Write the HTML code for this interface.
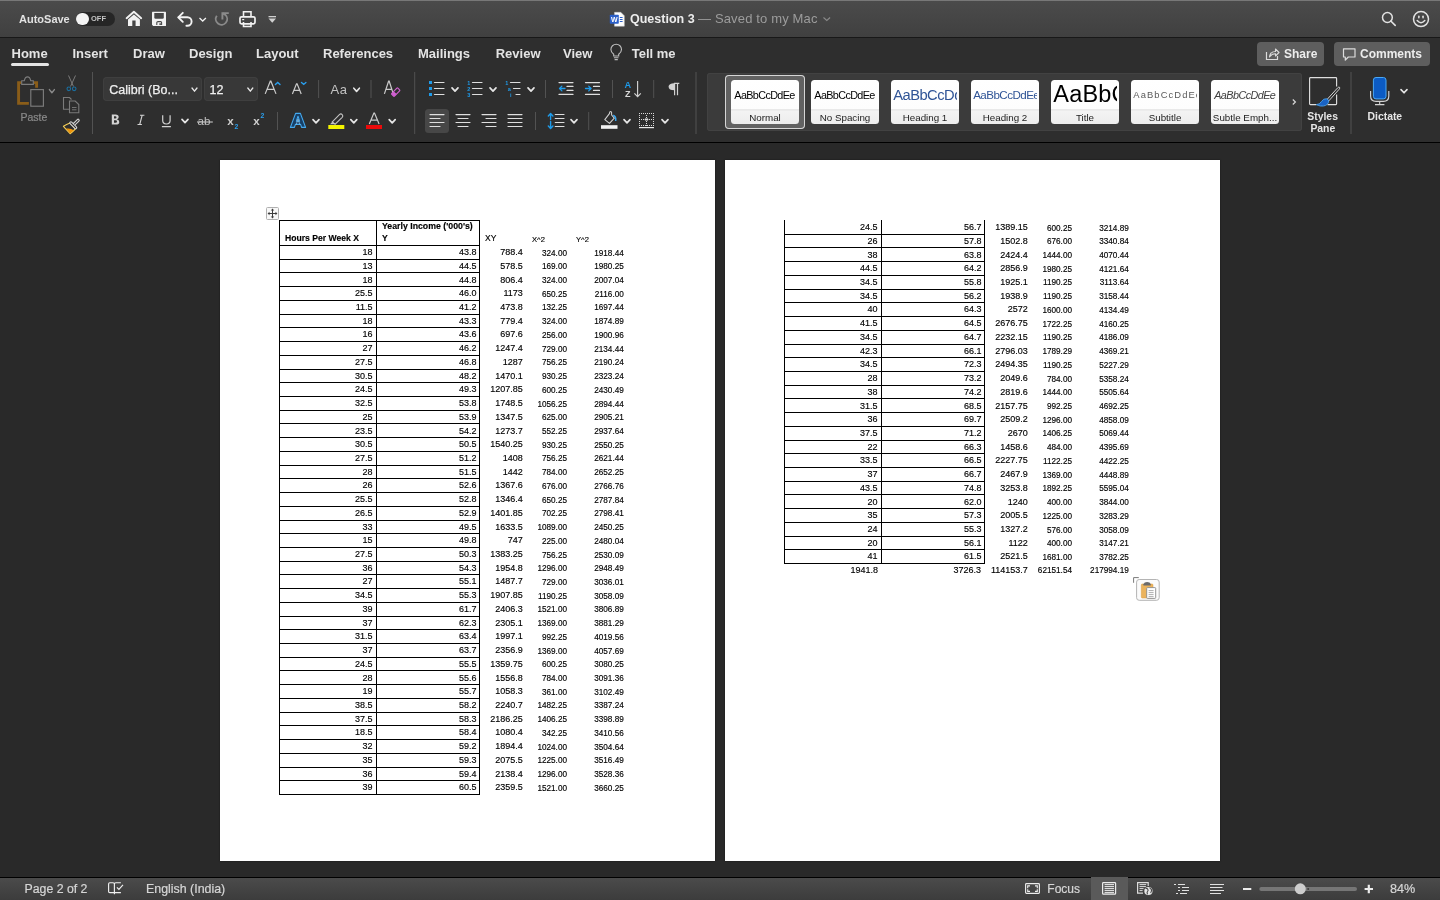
<!DOCTYPE html>
<html><head><meta charset="utf-8"><title>Question 3</title>
<style>
html,body{margin:0;padding:0;}
body{width:1440px;height:900px;overflow:hidden;position:relative;background:#292929;font-family:"Liberation Sans",sans-serif;}
.r{position:absolute;}
.t{position:absolute;line-height:0;white-space:nowrap;}
.d .t{-webkit-text-stroke:0.15px #000;}
svg.r{overflow:visible;}
</style></head><body><div id="w" style="position:absolute;left:0;top:0;width:1440px;height:900px;will-change:transform">
<div class="r" style="left:0;top:0;width:1440px;height:37px;background:linear-gradient(#4b4b4b,#404040)"></div><div class="r" style="left:0px;top:0px;width:1440px;height:1px;background:#787878;"></div><div class="r" style="left:0px;top:37px;width:1440px;height:1px;background:#181818;"></div><div class="r" style="left:0px;top:38px;width:1440px;height:104px;background:#2e2e2e;"></div><div class="r" style="left:0px;top:142px;width:1440px;height:1px;background:#000;"></div><div class="r" style="left:0px;top:877px;width:1440px;height:1px;background:#000;"></div><div class="r" style="left:0;top:878px;width:1440px;height:22px;background:linear-gradient(#4b4b4b,#3c3c3c)"></div><div class="t" style="left:19.00px;top:19.19px;font-size:11px;font-weight:700;color:#e2e2e2;">AutoSave</div><div class="r" style="left:76px;top:12px;width:39px;height:14px;border-radius:7px;background:#262626"></div><div class="r" style="left:76px;top:12.8px;width:12.5px;height:12.5px;border-radius:50%;background:#f4f4f4"></div><div class="t" style="left:91.00px;top:19.20px;font-size:7.5px;font-weight:700;color:#c4c4c4;">OFF</div><div class="t" style="left:630.00px;top:19.37px;font-size:12.5px;font-weight:700;color:#ececec;">Question 3</div><div class="t" style="left:698.00px;top:19.20px;font-size:13px;color:#9c9c9c;letter-spacing:0.15px;">— Saved to my Mac</div><div class="t" style="left:11.50px;top:53.50px;font-size:13px;font-weight:700;color:#e4e4e4;">Home</div><div class="t" style="left:72.50px;top:53.50px;font-size:13px;font-weight:700;color:#e4e4e4;">Insert</div><div class="t" style="left:133.00px;top:53.50px;font-size:13px;font-weight:700;color:#e4e4e4;">Draw</div><div class="t" style="left:189.00px;top:53.50px;font-size:13px;font-weight:700;color:#e4e4e4;">Design</div><div class="t" style="left:256.00px;top:53.50px;font-size:13px;font-weight:700;color:#e4e4e4;">Layout</div><div class="t" style="left:323.00px;top:53.50px;font-size:13px;font-weight:700;color:#e4e4e4;">References</div><div class="t" style="left:418.00px;top:53.50px;font-size:13px;font-weight:700;color:#e4e4e4;">Mailings</div><div class="t" style="left:495.70px;top:53.50px;font-size:13px;font-weight:700;color:#e4e4e4;">Review</div><div class="t" style="left:563.00px;top:53.50px;font-size:13px;font-weight:700;color:#e4e4e4;">View</div><div class="t" style="left:631.70px;top:53.50px;font-size:13px;font-weight:700;color:#e4e4e4;">Tell me</div><div class="r" style="left:11px;top:63px;width:38px;height:3px;border-radius:1.5px;background:#e4e4e4"></div><div class="r" style="left:1257px;top:42px;width:67px;height:24px;border-radius:4px;background:#5e5e5e"></div><div class="r" style="left:1334px;top:42px;width:96px;height:24px;border-radius:4px;background:#5e5e5e"></div><div class="t" style="left:1284.00px;top:53.84px;font-size:12px;font-weight:700;color:#ececec;">Share</div><div class="t" style="left:1360.00px;top:53.84px;font-size:12px;font-weight:700;color:#ececec;">Comments</div><div class="r" style="left:103px;top:77px;width:99px;height:24px;border-radius:4px;background:#383838;box-shadow:inset 0 0 0 1px #3f3f3f"></div><div class="r" style="left:204px;top:77px;width:54px;height:24px;border-radius:4px;background:#383838;box-shadow:inset 0 0 0 1px #3f3f3f"></div><div class="t" style="left:109.20px;top:89.57px;font-size:12.5px;color:#f0f0f0;-webkit-text-stroke:0.25px #f0f0f0;">Calibri (Bo...</div><div class="t" style="left:209.60px;top:89.57px;font-size:12.5px;color:#f0f0f0;-webkit-text-stroke:0.25px #f0f0f0;">12</div><div class="t" style="left:20.50px;top:117.36px;font-size:10.5px;color:#8a8a8a;-webkit-text-stroke:0.2px currentColor;">Paste</div><div class="r" style="left:707px;top:73px;width:595px;height:58px;border-radius:3px;background:#3b3b3b;box-shadow:inset 0 0 0 1px #424242"></div><div class="r" style="left:725px;top:75px;width:80px;height:53.5px;border-radius:4px;background:#626262;box-shadow:inset 0 0 0 1px #d6d6d6"></div><div class="r" style="left:731px;top:80px;width:68px;height:44px;border-radius:3.5px;background:linear-gradient(#fff 0,#fdfdfd 29.5px,#e9e9e9 29.5px,#ececec 30.5px,#f3f3f3 31px,#ededed 44px);overflow:hidden"><div class="r" style="left:0;top:0;width:66px;height:30px;overflow:hidden"><div class="t" style="left:3.3px;top:15.26px;font-size:10.8px;color:#000;font-style:normal;letter-spacing:-0.62px">AaBbCcDdEe</div></div><div class="t" style="left:0;width:68px;text-align:center;top:37.60px;font-size:9.8px;color:#1c1c1c">Normal</div></div><div class="r" style="left:811px;top:80px;width:68px;height:44px;border-radius:3.5px;background:linear-gradient(#fff 0,#fdfdfd 29.5px,#e9e9e9 29.5px,#ececec 30.5px,#f3f3f3 31px,#ededed 44px);overflow:hidden"><div class="r" style="left:0;top:0;width:66px;height:30px;overflow:hidden"><div class="t" style="left:3.3px;top:15.26px;font-size:10.8px;color:#000;font-style:normal;letter-spacing:-0.62px">AaBbCcDdEe</div></div><div class="t" style="left:0;width:68px;text-align:center;top:37.60px;font-size:9.8px;color:#1c1c1c">No Spacing</div></div><div class="r" style="left:891px;top:80px;width:68px;height:44px;border-radius:3.5px;background:linear-gradient(#fff 0,#fdfdfd 29.5px,#e9e9e9 29.5px,#ececec 30.5px,#f3f3f3 31px,#ededed 44px);overflow:hidden"><div class="r" style="left:0;top:0;width:66px;height:30px;overflow:hidden"><div class="t" style="left:2.2px;top:14.91px;font-size:14.7px;color:#2f5496;font-style:normal;letter-spacing:-0.5px">AaBbCcDdEe</div></div><div class="t" style="left:0;width:68px;text-align:center;top:37.60px;font-size:9.8px;color:#1c1c1c">Heading 1</div></div><div class="r" style="left:971px;top:80px;width:68px;height:44px;border-radius:3.5px;background:linear-gradient(#fff 0,#fdfdfd 29.5px,#e9e9e9 29.5px,#ececec 30.5px,#f3f3f3 31px,#ededed 44px);overflow:hidden"><div class="r" style="left:0;top:0;width:66px;height:30px;overflow:hidden"><div class="t" style="left:2.2px;top:15.08px;font-size:11.6px;color:#2f5496;font-style:normal;letter-spacing:-0.55px">AaBbCcDdEe</div></div><div class="t" style="left:0;width:68px;text-align:center;top:37.60px;font-size:9.8px;color:#1c1c1c">Heading 2</div></div><div class="r" style="left:1051px;top:80px;width:68px;height:44px;border-radius:3.5px;background:linear-gradient(#fff 0,#fdfdfd 29.5px,#e9e9e9 29.5px,#ececec 30.5px,#f3f3f3 31px,#ededed 44px);overflow:hidden"><div class="r" style="left:0;top:0;width:66px;height:30px;overflow:hidden"><div class="t" style="left:2.3px;top:14.16px;font-size:23.5px;color:#000;font-style:normal;letter-spacing:0.2px">AaBbCcDdEe</div></div><div class="t" style="left:0;width:68px;text-align:center;top:37.60px;font-size:9.8px;color:#1c1c1c">Title</div></div><div class="r" style="left:1131px;top:80px;width:68px;height:44px;border-radius:3.5px;background:linear-gradient(#fff 0,#fdfdfd 29.5px,#e9e9e9 29.5px,#ececec 30.5px,#f3f3f3 31px,#ededed 44px);overflow:hidden"><div class="r" style="left:0;top:0;width:66px;height:30px;overflow:hidden"><div class="t" style="left:2.3px;top:15.04px;font-size:9.4px;color:#5a5a5a;font-style:normal;letter-spacing:1.1px">AaBbCcDdEe</div></div><div class="t" style="left:0;width:68px;text-align:center;top:37.60px;font-size:9.8px;color:#1c1c1c">Subtitle</div></div><div class="r" style="left:1211px;top:80px;width:68px;height:44px;border-radius:3.5px;background:linear-gradient(#fff 0,#fdfdfd 29.5px,#e9e9e9 29.5px,#ececec 30.5px,#f3f3f3 31px,#ededed 44px);overflow:hidden"><div class="r" style="left:0;top:0;width:66px;height:30px;overflow:hidden"><div class="t" style="left:3.2px;top:15.26px;font-size:10.8px;color:#404040;font-style:italic;letter-spacing:-0.55px">AaBbCcDdEe</div></div><div class="t" style="left:0;width:68px;text-align:center;top:37.60px;font-size:9.8px;color:#1c1c1c">Subtle Emph...</div></div><div class="t" style="left:1307.30px;top:116.90px;font-size:10.4px;font-weight:700;color:#e6e6e6;">Styles</div><div class="t" style="left:1310.40px;top:128.80px;font-size:10.4px;font-weight:700;color:#e6e6e6;">Pane</div><div class="t" style="left:1367.50px;top:117.20px;font-size:10.4px;font-weight:700;color:#e6e6e6;">Dictate</div><div class="t" style="left:24.50px;top:888.74px;font-size:12.3px;color:#d6d6d6;-webkit-text-stroke:0.2px currentColor;">Page 2 of 2</div><div class="t" style="left:146.00px;top:888.70px;font-size:12.4px;color:#d6d6d6;-webkit-text-stroke:0.2px currentColor;">English (India)</div><div class="t" style="left:1047.30px;top:888.84px;font-size:12px;color:#d6d6d6;-webkit-text-stroke:0.2px currentColor;">Focus</div><div class="t" style="left:1390.00px;top:888.63px;font-size:12.6px;color:#d6d6d6;-webkit-text-stroke:0.2px currentColor;">84%</div><div class="r" style="left:1091px;top:877px;width:37px;height:23px;background:#5a5a5a;"></div><svg class="r" style="left:0;top:0" width="1440" height="143" viewBox="0 0 1440 143"><path d="M126.6 18.2 L133.9 11.7 L141.2 18.2" fill="none" stroke="#f2f2f2" stroke-width="1.9" stroke-linejoin="round" stroke-linecap="round"/><path d="M128 19.6 L133.9 14.5 L139.9 19.6 V26 H135.6 V20.4 H132.3 V26 H128 Z" fill="#f2f2f2"/><path d="M152 12.4 Q152 11.8 152.6 11.8 H165.4 Q166 11.8 166 12.4 V25.4 Q166 26 165.4 26 H153.2 L152 24.8 Z" fill="#f2f2f2"/><path d="M154.3 13.1 H163.8 V17.4 Q163.8 18.7 162.5 18.7 H155.6 Q154.3 18.7 154.3 17.4 Z" fill="#474747"/><path d="M156.8 25 V22.6 Q156.8 21.6 158 21.6 H160.6 Q161.6 21.6 161.6 22.6 V25" fill="none" stroke="#474747" stroke-width="1.1"/><rect x="159.4" y="23.3" width="1.5" height="1.7" fill="#474747"/><path d="M178.6 17.3 H187.4 A4.2 4.2 0 0 1 187.4 25.7 H186.4" fill="none" stroke="#f2f2f2" stroke-width="1.9" stroke-linecap="round"/><path d="M182.8 12.8 L178.3 17.3 L182.8 21.8" fill="none" stroke="#f2f2f2" stroke-width="1.9" stroke-linecap="round" stroke-linejoin="round"/><path d="M199.5 18 L202.7 21 L205.9 18" fill="none" stroke="#f2f2f2" stroke-width="1.3"/><path d="M216.8 15.8 A5.7 5.7 0 1 0 225.4 14.9 L222.6 13.4" fill="none" stroke="#8a8a8a" stroke-width="1.9"/><path d="M222.4 19.6 V13.1 H228.8" fill="none" stroke="#8a8a8a" stroke-width="1.9"/><path d="M243.5 17 V11.8 H251 V17 M243.5 22 V26.5 H251 V22" fill="none" stroke="#f2f2f2" stroke-width="1.6"/><rect x="240" y="16.8" width="15" height="7" rx="1.5" fill="none" stroke="#f2f2f2" stroke-width="1.7"/><rect x="242.2" y="19" width="2" height="1.2" fill="#f2f2f2"/><rect x="268.5" y="16" width="7.5" height="1.3" fill="#d0d0d0"/><path d="M268.5 18.6 H276 L272.25 22.8 Z" fill="#d0d0d0"/><path d="M614.5 12.3 H620.8 L624.3 15.8 V26.2 H614.5 Z" fill="#fdfdfd" stroke="#c8c8c8" stroke-width="0.5"/><rect x="609.8" y="14.8" width="9" height="9" rx="0.8" fill="#2b5fc9"/><text x="614.3" y="22" font-size="7" font-weight="700" fill="#fff" text-anchor="middle" font-family="Liberation Sans">W</text><path d="M619.8 17.5 H622.6 M619.8 19.5 H622.6 M619.8 21.5 H622.6" stroke="#2b5fc9" stroke-width="1"/><path d="M823.5 17.5 L826.8 20.5 L830.1 17.5" fill="none" stroke="#8a8a8a" stroke-width="1.1"/><circle cx="1387.4" cy="17.5" r="4.9" fill="none" stroke="#e2e2e2" stroke-width="1.5"/><path d="M1390.8 21 L1395.2 25.4" stroke="#e2e2e2" stroke-width="1.6" stroke-linecap="round"/><circle cx="1421" cy="19.1" r="7.5" fill="none" stroke="#e2e2e2" stroke-width="1.5"/><rect x="1418.1" y="15.6" width="1.5" height="2.9" rx="0.7" fill="#e2e2e2"/><rect x="1422.3" y="15.6" width="1.5" height="2.9" rx="0.7" fill="#e2e2e2"/><path d="M1417.2 20.6 Q1421 24.8 1424.8 20.6" fill="none" stroke="#e2e2e2" stroke-width="1.5" stroke-linecap="round"/><path d="M613.7 54.3 Q610.9 52.1 610.9 49.5 A5.3 5.3 0 0 1 621.5 49.5 Q621.5 52.1 618.7 54.3 V56 H613.7 Z" fill="none" stroke="#bdbdbd" stroke-width="1.1"/><path d="M613.9 57.8 H618.5 M614.6 59.6 H617.8" stroke="#bdbdbd" stroke-width="1.1"/><path d="M1266.5 52 V59.5 H1277.5 V56" fill="none" stroke="#dcdcdc" stroke-width="1.2"/><path d="M1269.5 57 Q1270 51.5 1275.5 51.5 V49 L1279 52.5 L1275.5 56 V53.8 Q1272 53.5 1269.5 57 Z" fill="none" stroke="#dcdcdc" stroke-width="1.1" stroke-linejoin="round"/><path d="M1343.5 48.8 H1355 V57 H1348.3 L1345.3 60.2 V57 H1343.5 Z" fill="none" stroke="#dcdcdc" stroke-width="1.2" stroke-linejoin="round"/><path d="M21.2 82.6 H18.6 V103.4 H28.9 M33.9 82.6 H36.6 V87.8" fill="none" stroke="#8a5d19" stroke-width="2.9"/><path d="M21.7 84.4 V80.7 H24.3 Q25 76.9 27.5 76.9 Q30 76.9 30.7 80.7 H33.3 V84.4 Z" fill="none" stroke="#7c7c7c" stroke-width="1.1"/><rect x="30.8" y="89.6" width="12.6" height="16.6" fill="none" stroke="#7c7c7c" stroke-width="1.15"/><path d="M49.4 89.6 L51.9 92.8 L54.4 89.6" fill="none" stroke="#8a8a8a" stroke-width="1.4" stroke-linecap="round" stroke-linejoin="round"/><path d="M68.5 75.5 L73.5 86.5 M75.5 75.5 L70.5 86.5" stroke="#7a7a7a" stroke-width="1"/><circle cx="68.8" cy="88.8" r="1.8" fill="none" stroke="#1a6fa0" stroke-width="1.1"/><circle cx="74.2" cy="88.8" r="1.8" fill="none" stroke="#1a6fa0" stroke-width="1.1"/><path d="M70 109.3 H63.5 V97.5 H69.5 L71.5 99.5" fill="none" stroke="#7a7a7a" stroke-width="1.1"/><path d="M69.5 101 H75.2 L78.8 104.6 V112.7 H69.5 Z" fill="none" stroke="#7a7a7a" stroke-width="1.1"/><path d="M72 107.5 H76.5 M72 109.8 H76.5" stroke="#7a7a7a" stroke-width="0.9"/><path d="M63.4 126.3 Q66.5 124.2 70 123 L75.3 129 Q72.8 131.6 70.1 133.7 Z" fill="#2e2e2e" stroke="#f4cd55" stroke-width="1.1" stroke-linejoin="round"/><path d="M66.2 128.6 Q70.6 127.9 73.9 130.3 L70.1 133.3 Z" fill="#f0950a"/><path d="M74.2 124.2 L78.1 120.3 M70.9 122.9 L75.6 127.6" stroke="#d4d4d4" stroke-width="3.3" stroke-linecap="round"/><path d="M74.6 123.8 L78.1 120.3 M70.9 122.9 L75.6 127.6" stroke="#2e2e2e" stroke-width="1.1" stroke-linecap="round"/><path d="M92.5 72 V134" stroke="#525252" stroke-width="1"/><path d="M318.6 80 V98" stroke="#525252" stroke-width="1"/><path d="M371 80 V98" stroke="#525252" stroke-width="1"/><path d="M277.5 112 V130" stroke="#525252" stroke-width="1"/><path d="M414.7 72 V134" stroke="#525252" stroke-width="1"/><path d="M545.5 80 V98" stroke="#525252" stroke-width="1"/><path d="M612.5 80 V98" stroke="#525252" stroke-width="1"/><path d="M653.7 80 V98" stroke="#525252" stroke-width="1"/><path d="M535.5 112 V130" stroke="#525252" stroke-width="1"/><path d="M588.7 112 V130" stroke="#525252" stroke-width="1"/><path d="M696 72 V134" stroke="#525252" stroke-width="1"/><path d="M1351 72 V134" stroke="#525252" stroke-width="1"/><path d="M192 88.0 L194.5 91.19999999999999 L197 88.0" fill="none" stroke="#e6e6e6" stroke-width="1.3" stroke-linecap="round" stroke-linejoin="round"/><path d="M247.8 88.0 L250.3 91.19999999999999 L252.8 88.0" fill="none" stroke="#e6e6e6" stroke-width="1.3" stroke-linecap="round" stroke-linejoin="round"/><path d="M353.8 88.2 L356.6 91.39999999999999 L359.40000000000003 88.2" fill="none" stroke="#e6e6e6" stroke-width="1.6" stroke-linecap="round" stroke-linejoin="round"/><path d="M182 119.4 L185.0 122.6 L188 119.4" fill="none" stroke="#e6e6e6" stroke-width="1.7" stroke-linecap="round" stroke-linejoin="round"/><path d="M313 119.60000000000001 L316.0 122.8 L319 119.60000000000001" fill="none" stroke="#e6e6e6" stroke-width="1.7" stroke-linecap="round" stroke-linejoin="round"/><path d="M350.8 119.60000000000001 L353.8 122.8 L356.8 119.60000000000001" fill="none" stroke="#e6e6e6" stroke-width="1.7" stroke-linecap="round" stroke-linejoin="round"/><path d="M389.2 119.60000000000001 L392.2 122.8 L395.2 119.60000000000001" fill="none" stroke="#e6e6e6" stroke-width="1.7" stroke-linecap="round" stroke-linejoin="round"/><path d="M452 87.9 L455.0 91.1 L458 87.9" fill="none" stroke="#e6e6e6" stroke-width="1.7" stroke-linecap="round" stroke-linejoin="round"/><path d="M490 87.9 L493.0 91.1 L496 87.9" fill="none" stroke="#e6e6e6" stroke-width="1.7" stroke-linecap="round" stroke-linejoin="round"/><path d="M528 87.9 L531.0 91.1 L534 87.9" fill="none" stroke="#e6e6e6" stroke-width="1.7" stroke-linecap="round" stroke-linejoin="round"/><path d="M571 119.60000000000001 L574.0 122.8 L577 119.60000000000001" fill="none" stroke="#e6e6e6" stroke-width="1.7" stroke-linecap="round" stroke-linejoin="round"/><path d="M624 119.60000000000001 L627.0 122.8 L630 119.60000000000001" fill="none" stroke="#e6e6e6" stroke-width="1.7" stroke-linecap="round" stroke-linejoin="round"/><path d="M662 119.60000000000001 L665.0 122.8 L668 119.60000000000001" fill="none" stroke="#e6e6e6" stroke-width="1.7" stroke-linecap="round" stroke-linejoin="round"/><path d="M1401 89.60000000000001 L1404.0 92.8 L1407 89.60000000000001" fill="none" stroke="#e6e6e6" stroke-width="1.6" stroke-linecap="round" stroke-linejoin="round"/><path d="M265.2 93.9 L270.3 81.2 H270.9 L276 93.9 M267.1 89.3 H274.1" fill="none" stroke="#cacaca" stroke-width="1.2"/><path d="M275.4 84.6 L277.7 82.4 L280 84.6" fill="none" stroke="#2a9fee" stroke-width="1.4" stroke-linecap="round"/><path d="M292.4 93.9 L296.5 83.8 H297.1 L301.2 93.9 M293.9 90.4 H299.7" fill="none" stroke="#cacaca" stroke-width="1.2"/><path d="M301.5 82.4 L303.7 84.4 L305.9 82.4" fill="none" stroke="#2a9fee" stroke-width="1.4" stroke-linecap="round"/><text x="330.6" y="94" font-size="13" fill="#c2c2c2" font-family="Liberation Sans" letter-spacing="0.5">Aa</text><path d="M384.4 93.9 L388.6 81.2 H389.2 L393.3 93.9 M385.9 89.3 H391.9" fill="none" stroke="#cacaca" stroke-width="1.2"/><path d="M391.8 93.4 L396.9 88.2 Q397.4 87.7 397.9 88.2 L399.6 89.9 Q400.1 90.4 399.6 90.9 L394.5 96.1 Q394 96.6 393.5 96.1 L391.8 94.4 Q391.3 93.9 391.8 93.4 Z" fill="none" stroke="#d060d0" stroke-width="1.15"/><path d="M392 93.3 L393.9 91.4 L396.6 94.1 L394.7 96 Q394 96.6 393.4 96 L392 94.6 Q391.4 94 392 93.3 Z" fill="#d060d0"/><path d="M111.8 114.5 H115.6 Q118.7 114.5 118.7 117 Q118.7 118.8 116.8 119.3 Q119.3 119.8 119.3 122 Q119.3 124.6 115.9 124.6 H111.8 Z M114 116.3 V118.6 H115.3 Q116.5 118.6 116.5 117.45 Q116.5 116.3 115.3 116.3 Z M114 120.3 V122.8 H115.6 Q117 122.8 117 121.55 Q117 120.3 115.6 120.3 Z" fill="#d2d2d2" fill-rule="evenodd"/><path d="M140 115.2 H144.4 M137.5 124.5 H141.9 M142.2 115.2 L139.7 124.5" fill="none" stroke="#d2d2d2" stroke-width="1.15"/><path d="M162.7 115.2 V120.6 Q162.7 124 166.4 124 Q170.1 124 170.1 120.6 V115.2 M161.9 126.6 H170.9" fill="none" stroke="#d2d2d2" stroke-width="1.2"/><text x="197.6" y="125" font-size="11.6" fill="#c2c2c2" font-family="Liberation Sans">ab</text><path d="M197 122 H212.8" stroke="#c2c2c2" stroke-width="1.15"/><text x="227.3" y="125" font-size="11.6" font-weight="700" fill="#d2d2d2" font-family="Liberation Sans">x</text><text x="234.6" y="129.2" font-size="6.8" font-weight="700" fill="#2a9fee" font-family="Liberation Sans">2</text><text x="253.2" y="125" font-size="11.6" font-weight="700" fill="#d2d2d2" font-family="Liberation Sans">x</text><text x="260.4" y="118.3" font-size="6.8" font-weight="700" fill="#2a9fee" font-family="Liberation Sans">2</text><path d="M290.4 127.4 L295.6 113.4 H300.4 L305.6 127.4 H301.6 L300.6 124.4 H295.4 L294.4 127.4 Z M296.4 121.2 H299.6 L298 116.2 Z" fill="#173f66" stroke="#44aaf0" stroke-width="1.1" stroke-linejoin="round" fill-rule="evenodd"/><path d="M296.2 124.6 L298 119 L299.8 124.6" fill="none" stroke="#9fd3f7" stroke-width="0.8" opacity="0.8"/><path d="M332.3 121.8 L339.4 114.6 Q340.9 113.3 342.2 114.6 Q343.5 115.9 342.2 117.3 L335.1 124.2 Z" fill="none" stroke="#c2c2c2" stroke-width="1.1"/><path d="M332.3 121.8 L330 124.3 H333.5 L335.1 124.2 Z" fill="#c2c2c2"/><rect x="328.3" y="125" width="16" height="4" fill="#f4f400"/><path d="M369.3 124 L373.9 113 H374.5 L379.1 124 M370.9 120.2 H377.5" fill="none" stroke="#cacaca" stroke-width="1.2"/><rect x="366" y="125" width="16" height="4" fill="#ec0b0b"/><rect x="429" y="81.0" width="3" height="3" fill="#1e9bea"/><rect x="429" y="87.0" width="3" height="3" fill="#1e9bea"/><rect x="429" y="93.0" width="3" height="3" fill="#1e9bea"/><path d="M434.5 82.5 H444" stroke="#dedede" stroke-width="1.2" stroke-linecap="round"/><path d="M434.5 88.5 H444" stroke="#dedede" stroke-width="1.2" stroke-linecap="round"/><path d="M434.5 94.5 H444" stroke="#dedede" stroke-width="1.2" stroke-linecap="round"/><text x="467.2" y="84.8" font-size="5.5" font-weight="700" fill="#1e9bea" font-family="Liberation Sans">1</text><text x="467.2" y="90.8" font-size="5.5" font-weight="700" fill="#1e9bea" font-family="Liberation Sans">2</text><text x="467.2" y="96.8" font-size="5.5" font-weight="700" fill="#1e9bea" font-family="Liberation Sans">3</text><path d="M472.5 82.5 H482" stroke="#dedede" stroke-width="1.2" stroke-linecap="round"/><path d="M472.5 88.5 H482" stroke="#dedede" stroke-width="1.2" stroke-linecap="round"/><path d="M472.5 94.5 H482" stroke="#dedede" stroke-width="1.2" stroke-linecap="round"/><text x="505.3" y="84.8" font-size="5.5" font-weight="700" fill="#1e9bea" font-family="Liberation Sans">1</text><text x="507.8" y="90.8" font-size="5.5" font-weight="700" fill="#1e9bea" font-family="Liberation Sans">a</text><text x="510" y="97" font-size="5.5" font-weight="700" fill="#1e9bea" font-family="Liberation Sans">i</text><path d="M510.5 82.5 H520" stroke="#dedede" stroke-width="1.2" stroke-linecap="round"/><path d="M513.5 88.5 H520" stroke="#dedede" stroke-width="1.2" stroke-linecap="round"/><path d="M516 94.5 H520" stroke="#dedede" stroke-width="1.2" stroke-linecap="round"/><path d="M559 82.6 H573" stroke="#dedede" stroke-width="1.2" stroke-linecap="round"/><path d="M559 94.4 H573" stroke="#dedede" stroke-width="1.2" stroke-linecap="round"/><path d="M567 86.4 H573" stroke="#dedede" stroke-width="1.2" stroke-linecap="round"/><path d="M567 90.4 H573" stroke="#dedede" stroke-width="1.2" stroke-linecap="round"/><path d="M565 88.5 H559.6 M561.9 86.1 L559.5 88.5 L561.9 90.9" fill="none" stroke="#1e9bea" stroke-width="1.3" stroke-linecap="round" stroke-linejoin="round"/><path d="M585.5 82.6 H599.5" stroke="#dedede" stroke-width="1.2" stroke-linecap="round"/><path d="M585.5 94.4 H599.5" stroke="#dedede" stroke-width="1.2" stroke-linecap="round"/><path d="M593.5 86.4 H599.5" stroke="#dedede" stroke-width="1.2" stroke-linecap="round"/><path d="M593.5 90.4 H599.5" stroke="#dedede" stroke-width="1.2" stroke-linecap="round"/><path d="M585.5 88.5 H591 M588.7 86.1 L591.1 88.5 L588.7 90.9" fill="none" stroke="#1e9bea" stroke-width="1.3" stroke-linecap="round" stroke-linejoin="round"/><text x="624.6" y="87.8" font-size="9.2" font-weight="700" fill="#1e9bea" font-family="Liberation Sans">A</text><text x="624.9" y="97" font-size="9" font-weight="700" fill="#d8d8d8" font-family="Liberation Sans">Z</text><path d="M637.6 81 V96.5 M634.4 93.4 L637.6 96.6 L640.8 93.4" fill="none" stroke="#d2d2d2" stroke-width="1.15"/><path d="M673.9 83.3 H679.3 M674.6 83.3 V95.2 M677.5 83.3 V95.2" stroke="#d2d2d2" stroke-width="1.2"/><path d="M674.4 83.3 Q668.6 83.3 668.6 86.8 Q668.6 90.3 674.4 90.3 Z" fill="#d2d2d2"/><rect x="425" y="109" width="24" height="24" rx="3.5" fill="#474747"/><path d="M430 114.55 H444" stroke="#dedede" stroke-width="1.2" stroke-linecap="round"/><path d="M430 122.5 H444" stroke="#dedede" stroke-width="1.2" stroke-linecap="round"/><path d="M430 118.5 H440" stroke="#dedede" stroke-width="1.2" stroke-linecap="round"/><path d="M430 126.5 H440" stroke="#dedede" stroke-width="1.2" stroke-linecap="round"/><path d="M456 114.55 H470" stroke="#dedede" stroke-width="1.2" stroke-linecap="round"/><path d="M456 122.5 H470" stroke="#dedede" stroke-width="1.2" stroke-linecap="round"/><path d="M458 118.5 H468" stroke="#dedede" stroke-width="1.2" stroke-linecap="round"/><path d="M458 126.5 H468" stroke="#dedede" stroke-width="1.2" stroke-linecap="round"/><path d="M482 114.55 H496" stroke="#dedede" stroke-width="1.2" stroke-linecap="round"/><path d="M482 122.5 H496" stroke="#dedede" stroke-width="1.2" stroke-linecap="round"/><path d="M486 118.5 H496" stroke="#dedede" stroke-width="1.2" stroke-linecap="round"/><path d="M486 126.5 H496" stroke="#dedede" stroke-width="1.2" stroke-linecap="round"/><path d="M508 114.55 H522" stroke="#dedede" stroke-width="1.2" stroke-linecap="round"/><path d="M508 118.5 H522" stroke="#dedede" stroke-width="1.2" stroke-linecap="round"/><path d="M508 122.5 H522" stroke="#dedede" stroke-width="1.2" stroke-linecap="round"/><path d="M508 126.5 H522" stroke="#dedede" stroke-width="1.2" stroke-linecap="round"/><path d="M555.3 114.5 H564" stroke="#dedede" stroke-width="1.2" stroke-linecap="round"/><path d="M555.3 118.5 H564" stroke="#dedede" stroke-width="1.2" stroke-linecap="round"/><path d="M555.3 122.5 H564" stroke="#dedede" stroke-width="1.2" stroke-linecap="round"/><path d="M555.3 126.5 H564" stroke="#dedede" stroke-width="1.2" stroke-linecap="round"/><path d="M550.6 114 V119.5 M550.6 121.5 V128 M548.3 116 L550.6 113.6 L552.9 116 M548.3 126 L550.6 128.4 L552.9 126" fill="none" stroke="#1e9bea" stroke-width="1.4" stroke-linecap="round" stroke-linejoin="round"/><path d="M604.8 119.6 L609.6 113.4 V112.4 Q609.6 111.4 610.6 111.4 Q611.6 111.4 611.6 112.4 V115 L614.3 118.2 L609.5 123.4 Z" fill="none" stroke="#d2d2d2" stroke-width="1.05" stroke-linejoin="round"/><path d="M613.2 115.2 Q616.3 116.4 615.7 121" fill="none" stroke="#3aa6ee" stroke-width="1.5"/><rect x="601" y="125.2" width="16.5" height="3.6" fill="#f2f2f2"/><g fill="#dadada"><rect x="639" y="113" width="1" height="1"/><rect x="639" y="125" width="1" height="1"/><rect x="641" y="113" width="1" height="1"/><rect x="641" y="125" width="1" height="1"/><rect x="643" y="113" width="1" height="1"/><rect x="643" y="125" width="1" height="1"/><rect x="645" y="113" width="1" height="1"/><rect x="645" y="125" width="1" height="1"/><rect x="647" y="113" width="1" height="1"/><rect x="647" y="125" width="1" height="1"/><rect x="649" y="113" width="1" height="1"/><rect x="649" y="125" width="1" height="1"/><rect x="651" y="113" width="1" height="1"/><rect x="651" y="125" width="1" height="1"/><rect x="653" y="113" width="1" height="1"/><rect x="653" y="125" width="1" height="1"/><rect x="639" y="115" width="1" height="1"/><rect x="653" y="115" width="1" height="1"/><rect x="646" y="115" width="1" height="1"/><rect x="639" y="117" width="1" height="1"/><rect x="653" y="117" width="1" height="1"/><rect x="646" y="117" width="1" height="1"/><rect x="639" y="119" width="1" height="1"/><rect x="653" y="119" width="1" height="1"/><rect x="646" y="119" width="1" height="1"/><rect x="639" y="121" width="1" height="1"/><rect x="653" y="121" width="1" height="1"/><rect x="646" y="121" width="1" height="1"/><rect x="639" y="123" width="1" height="1"/><rect x="653" y="123" width="1" height="1"/><rect x="646" y="123" width="1" height="1"/><rect x="639" y="125" width="1" height="1"/><rect x="653" y="125" width="1" height="1"/><rect x="646" y="125" width="1" height="1"/><rect x="641" y="119" width="1" height="1"/><rect x="643" y="119" width="1" height="1"/><rect x="645" y="119" width="1" height="1"/><rect x="647" y="119" width="1" height="1"/><rect x="649" y="119" width="1" height="1"/><rect x="651" y="119" width="1" height="1"/></g><path d="M646.5 117.6 L648 119.5 L646.5 121.4 L645 119.5 Z" fill="none" stroke="#dadada" stroke-width="0.8"/><path d="M639 127.6 H654" stroke="#ececec" stroke-width="1.2"/><path d="M1292.8 99.5 L1295.4 102 L1292.8 104.5" fill="none" stroke="#d8d8d8" stroke-width="1.2"/><path d="M1316.5 104.6 H1310.4 Q1309.6 104.6 1309.6 103.8 V78.4 Q1309.6 77.6 1310.4 77.6 H1335.8 Q1336.6 77.6 1336.6 78.4 V86.5 M1336.6 94.5 V103.8 Q1336.6 104.6 1335.8 104.6 H1327.5" fill="none" stroke="#dedede" stroke-width="1.15"/><path d="M1327.3 99.2 L1337.6 87.9 Q1339 86.6 1339.6 87.3 Q1340.2 88.1 1339 89.4 L1328.9 100.8 Z" fill="#2e2e2e" stroke="#d4d4d4" stroke-width="1"/><path d="M1316.4 104.6 Q1319.8 104.5 1321.4 101.6 Q1323.4 98.2 1326.8 98.8 Q1329.4 99.8 1328.4 102.6 Q1326.6 106.6 1320.4 106 Q1318 105.6 1316.4 104.6 Z" fill="#1a63c4" stroke="#4aa3ee" stroke-width="0.9"/><rect x="1373.4" y="77.5" width="12.6" height="21.4" rx="2.6" fill="#0b5bc4" stroke="#4aa8f5" stroke-width="1"/><path d="M1370.6 91 V96 Q1370.6 101.4 1376 101.4 H1383.4 Q1388.8 101.4 1388.8 96 V91 M1379.7 101.4 V104.6 M1375 104.6 H1384.4" fill="none" stroke="#d4d4d4" stroke-width="1.15"/></svg><svg class="r" style="left:0;top:870px" width="1440" height="30" viewBox="0 870 1440 30"><path d="M114.4 892.6 H109.8 Q108.6 892.6 108.6 891.4 V883.9 Q108.6 882.7 109.8 882.7 H113 Q114.4 882.7 114.4 884.1 V894.3 M114.4 884.1 Q114.4 882.7 115.8 882.7 H120.9 M114.4 892.6 H120.9" fill="none" stroke="#efefef" stroke-width="1.15"/><path d="M116.9 887.3 L118.9 889.3 L123 884.8" fill="none" stroke="#efefef" stroke-width="1.15"/><rect x="1025.6" y="883.6" width="13.8" height="9.7" rx="0.9" fill="none" stroke="#ececec" stroke-width="1.15"/><path d="M1027.7 888.2 V885.9 H1030 M1035 885.9 H1037.3 V888.2 M1037.3 889.2 V891.4 H1035 M1030 891.4 H1027.7 V889.2" fill="none" stroke="#ececec" stroke-width="1.1"/><rect x="1102.6" y="882.6" width="13" height="11.6" rx="0.8" fill="none" stroke="#ececec" stroke-width="1.2"/><path d="M1104.6 884.6 H1114 M1104.6 886.6 H1114 M1104.6 888.6 H1114 M1104.6 890.6 H1114 M1104.6 892.6 H1114" stroke="#ececec" stroke-width="1"/><path d="M1143 893.2 H1137.6 V882.6 H1148.2 V886.5" fill="none" stroke="#dcdcdc" stroke-width="1.2"/><path d="M1139.5 884.6 H1146.2 M1139.5 886.6 H1146.2 M1139.5 888.6 H1143.6 M1139.5 890.6 H1142.6" stroke="#dcdcdc" stroke-width="1"/><circle cx="1148.4" cy="891" r="5" fill="#474747"/><circle cx="1148.4" cy="891" r="4.1" fill="#e6e6e6"/><path d="M1145.5 888.6 Q1147 888 1147.8 889.3 Q1148.6 890.8 1147.4 891.6 Q1146.6 892.6 1147.6 894.3 M1149.8 887.5 Q1150 889 1151.4 889.2 Q1152 891.3 1150.6 892.8" fill="none" stroke="#474747" stroke-width="1.1"/><path d="M1174 884.5 H1176 M1178 884.5 H1185 M1178 887.5 H1180 M1182 887.5 H1189 M1178 890.5 H1180 M1182 890.5 H1189 M1176 893.5 H1178 M1180 893.5 H1187" stroke="#e0e0e0" stroke-width="1.1"/><path d="M1210 884.5 H1224 M1210 887.5 H1222.5 M1210 890.5 H1224 M1210 893.5 H1221" stroke="#e0e0e0" stroke-width="1.1"/><path d="M1243 889 H1251.3" stroke="#ececec" stroke-width="2"/><path d="M1364.6 889 H1373 M1368.8 884.8 V893.2" stroke="#ececec" stroke-width="2.2"/><rect x="1259.3" y="887" width="97.7" height="4" rx="2" fill="#767676"/><circle cx="1308.2" cy="889" r="1" fill="#3a3a3a"/><circle cx="1300.3" cy="888.8" r="5.5" fill="#cdcdcd"/></svg>
<div class="d"><div class="r" style="left:220px;top:160px;width:495px;height:701px;background:#fff;box-shadow:0 0 1.5px rgba(0,0,0,0.5)"></div><div class="r" style="left:266px;top:207px;width:13px;height:13px;border:1px solid #b0b0b0;border-radius:1.5px;background:#f8f8f8;box-sizing:border-box"></div><svg class="r" style="left:266px;top:207px" width="13" height="13" viewBox="0 0 13 13"><path d="M6.5 2.6v7.8M2.6 6.5h7.8" stroke="#3c3c3c" stroke-width="1"/><path d="M6.5 1.6l-1.7 1.9h3.4zM6.5 11.4l-1.7-1.9h3.4zM1.6 6.5l1.9-1.7v3.4zM11.4 6.5l-1.9-1.7v3.4z" fill="#3c3c3c"/></svg><div class="r" style="left:279px;top:220px;width:201px;height:1px;background:#000;"></div><div class="r" style="left:279px;top:220px;width:1px;height:25px;background:#000;"></div><div class="r" style="left:376px;top:220px;width:1px;height:25px;background:#000;"></div><div class="r" style="left:479px;top:220px;width:1px;height:25px;background:#000;"></div><div class="r" style="left:279px;top:245px;width:201px;height:1px;background:#000;"></div><div class="t" style="left:285.00px;top:237.82px;font-size:8.6px;font-weight:700;color:#000;">Hours Per Week X</div><div class="t" style="left:382.00px;top:225.72px;font-size:8.75px;font-weight:700;color:#000;">Yearly Income ('000's)</div><div class="t" style="left:382.00px;top:237.82px;font-size:8.6px;font-weight:700;color:#000;">Y</div><div class="t" style="left:485.00px;top:238.45px;font-size:8.5px;color:#000;">XY</div><div class="t" style="left:532.00px;top:240.17px;font-size:7.6px;color:#000;">X^2</div><div class="t" style="left:576.00px;top:240.17px;font-size:7.6px;color:#000;">Y^2</div><div class="r" style="left:279px;top:245px;width:1px;height:550px;background:#000;"></div><div class="r" style="left:376px;top:245px;width:1px;height:550px;background:#000;"></div><div class="r" style="left:479px;top:245px;width:1px;height:550px;background:#000;"></div><div class="r" style="left:279px;top:259px;width:201px;height:1px;background:#000;"></div><div class="t" style="left:72.50px;width:300px;text-align:right;top:252.08px;font-size:9.0px;color:#000;">18</div><div class="t" style="left:176.50px;width:300px;text-align:right;top:252.08px;font-size:9.0px;color:#000;">43.8</div><div class="t" style="left:222.80px;width:300px;text-align:right;top:252.08px;font-size:9.0px;color:#000;">788.4</div><div class="t" style="left:267.00px;width:300px;text-align:right;top:253.56px;font-size:8.2px;color:#000;">324.00</div><div class="t" style="left:323.80px;width:300px;text-align:right;top:253.56px;font-size:8.2px;color:#000;">1918.44</div><div class="r" style="left:279px;top:272px;width:201px;height:1px;background:#000;"></div><div class="t" style="left:72.50px;width:300px;text-align:right;top:265.81px;font-size:9.0px;color:#000;">13</div><div class="t" style="left:176.50px;width:300px;text-align:right;top:265.81px;font-size:9.0px;color:#000;">44.5</div><div class="t" style="left:222.80px;width:300px;text-align:right;top:265.81px;font-size:9.0px;color:#000;">578.5</div><div class="t" style="left:267.00px;width:300px;text-align:right;top:267.28px;font-size:8.2px;color:#000;">169.00</div><div class="t" style="left:323.80px;width:300px;text-align:right;top:267.28px;font-size:8.2px;color:#000;">1980.25</div><div class="r" style="left:279px;top:286px;width:201px;height:1px;background:#000;"></div><div class="t" style="left:72.50px;width:300px;text-align:right;top:279.53px;font-size:9.0px;color:#000;">18</div><div class="t" style="left:176.50px;width:300px;text-align:right;top:279.53px;font-size:9.0px;color:#000;">44.8</div><div class="t" style="left:222.80px;width:300px;text-align:right;top:279.53px;font-size:9.0px;color:#000;">806.4</div><div class="t" style="left:267.00px;width:300px;text-align:right;top:281.01px;font-size:8.2px;color:#000;">324.00</div><div class="t" style="left:323.80px;width:300px;text-align:right;top:281.01px;font-size:8.2px;color:#000;">2007.04</div><div class="r" style="left:279px;top:300px;width:201px;height:1px;background:#000;"></div><div class="t" style="left:72.50px;width:300px;text-align:right;top:293.26px;font-size:9.0px;color:#000;">25.5</div><div class="t" style="left:176.50px;width:300px;text-align:right;top:293.26px;font-size:9.0px;color:#000;">46.0</div><div class="t" style="left:222.80px;width:300px;text-align:right;top:293.26px;font-size:9.0px;color:#000;">1173</div><div class="t" style="left:267.00px;width:300px;text-align:right;top:294.73px;font-size:8.2px;color:#000;">650.25</div><div class="t" style="left:323.80px;width:300px;text-align:right;top:294.73px;font-size:8.2px;color:#000;">2116.00</div><div class="r" style="left:279px;top:314px;width:201px;height:1px;background:#000;"></div><div class="t" style="left:72.50px;width:300px;text-align:right;top:306.98px;font-size:9.0px;color:#000;">11.5</div><div class="t" style="left:176.50px;width:300px;text-align:right;top:306.98px;font-size:9.0px;color:#000;">41.2</div><div class="t" style="left:222.80px;width:300px;text-align:right;top:306.98px;font-size:9.0px;color:#000;">473.8</div><div class="t" style="left:267.00px;width:300px;text-align:right;top:308.46px;font-size:8.2px;color:#000;">132.25</div><div class="t" style="left:323.80px;width:300px;text-align:right;top:308.46px;font-size:8.2px;color:#000;">1697.44</div><div class="r" style="left:279px;top:327px;width:201px;height:1px;background:#000;"></div><div class="t" style="left:72.50px;width:300px;text-align:right;top:320.71px;font-size:9.0px;color:#000;">18</div><div class="t" style="left:176.50px;width:300px;text-align:right;top:320.71px;font-size:9.0px;color:#000;">43.3</div><div class="t" style="left:222.80px;width:300px;text-align:right;top:320.71px;font-size:9.0px;color:#000;">779.4</div><div class="t" style="left:267.00px;width:300px;text-align:right;top:322.18px;font-size:8.2px;color:#000;">324.00</div><div class="t" style="left:323.80px;width:300px;text-align:right;top:322.18px;font-size:8.2px;color:#000;">1874.89</div><div class="r" style="left:279px;top:341px;width:201px;height:1px;background:#000;"></div><div class="t" style="left:72.50px;width:300px;text-align:right;top:334.43px;font-size:9.0px;color:#000;">16</div><div class="t" style="left:176.50px;width:300px;text-align:right;top:334.43px;font-size:9.0px;color:#000;">43.6</div><div class="t" style="left:222.80px;width:300px;text-align:right;top:334.43px;font-size:9.0px;color:#000;">697.6</div><div class="t" style="left:267.00px;width:300px;text-align:right;top:335.91px;font-size:8.2px;color:#000;">256.00</div><div class="t" style="left:323.80px;width:300px;text-align:right;top:335.91px;font-size:8.2px;color:#000;">1900.96</div><div class="r" style="left:279px;top:355px;width:201px;height:1px;background:#000;"></div><div class="t" style="left:72.50px;width:300px;text-align:right;top:348.16px;font-size:9.0px;color:#000;">27</div><div class="t" style="left:176.50px;width:300px;text-align:right;top:348.16px;font-size:9.0px;color:#000;">46.2</div><div class="t" style="left:222.80px;width:300px;text-align:right;top:348.16px;font-size:9.0px;color:#000;">1247.4</div><div class="t" style="left:267.00px;width:300px;text-align:right;top:349.63px;font-size:8.2px;color:#000;">729.00</div><div class="t" style="left:323.80px;width:300px;text-align:right;top:349.63px;font-size:8.2px;color:#000;">2134.44</div><div class="r" style="left:279px;top:369px;width:201px;height:1px;background:#000;"></div><div class="t" style="left:72.50px;width:300px;text-align:right;top:361.88px;font-size:9.0px;color:#000;">27.5</div><div class="t" style="left:176.50px;width:300px;text-align:right;top:361.88px;font-size:9.0px;color:#000;">46.8</div><div class="t" style="left:222.80px;width:300px;text-align:right;top:361.88px;font-size:9.0px;color:#000;">1287</div><div class="t" style="left:267.00px;width:300px;text-align:right;top:363.36px;font-size:8.2px;color:#000;">756.25</div><div class="t" style="left:323.80px;width:300px;text-align:right;top:363.36px;font-size:8.2px;color:#000;">2190.24</div><div class="r" style="left:279px;top:382px;width:201px;height:1px;background:#000;"></div><div class="t" style="left:72.50px;width:300px;text-align:right;top:375.61px;font-size:9.0px;color:#000;">30.5</div><div class="t" style="left:176.50px;width:300px;text-align:right;top:375.61px;font-size:9.0px;color:#000;">48.2</div><div class="t" style="left:222.80px;width:300px;text-align:right;top:375.61px;font-size:9.0px;color:#000;">1470.1</div><div class="t" style="left:267.00px;width:300px;text-align:right;top:377.08px;font-size:8.2px;color:#000;">930.25</div><div class="t" style="left:323.80px;width:300px;text-align:right;top:377.08px;font-size:8.2px;color:#000;">2323.24</div><div class="r" style="left:279px;top:396px;width:201px;height:1px;background:#000;"></div><div class="t" style="left:72.50px;width:300px;text-align:right;top:389.33px;font-size:9.0px;color:#000;">24.5</div><div class="t" style="left:176.50px;width:300px;text-align:right;top:389.33px;font-size:9.0px;color:#000;">49.3</div><div class="t" style="left:222.80px;width:300px;text-align:right;top:389.33px;font-size:9.0px;color:#000;">1207.85</div><div class="t" style="left:267.00px;width:300px;text-align:right;top:390.81px;font-size:8.2px;color:#000;">600.25</div><div class="t" style="left:323.80px;width:300px;text-align:right;top:390.81px;font-size:8.2px;color:#000;">2430.49</div><div class="r" style="left:279px;top:410px;width:201px;height:1px;background:#000;"></div><div class="t" style="left:72.50px;width:300px;text-align:right;top:403.06px;font-size:9.0px;color:#000;">32.5</div><div class="t" style="left:176.50px;width:300px;text-align:right;top:403.06px;font-size:9.0px;color:#000;">53.8</div><div class="t" style="left:222.80px;width:300px;text-align:right;top:403.06px;font-size:9.0px;color:#000;">1748.5</div><div class="t" style="left:267.00px;width:300px;text-align:right;top:404.53px;font-size:8.2px;color:#000;">1056.25</div><div class="t" style="left:323.80px;width:300px;text-align:right;top:404.53px;font-size:8.2px;color:#000;">2894.44</div><div class="r" style="left:279px;top:423px;width:201px;height:1px;background:#000;"></div><div class="t" style="left:72.50px;width:300px;text-align:right;top:416.78px;font-size:9.0px;color:#000;">25</div><div class="t" style="left:176.50px;width:300px;text-align:right;top:416.78px;font-size:9.0px;color:#000;">53.9</div><div class="t" style="left:222.80px;width:300px;text-align:right;top:416.78px;font-size:9.0px;color:#000;">1347.5</div><div class="t" style="left:267.00px;width:300px;text-align:right;top:418.26px;font-size:8.2px;color:#000;">625.00</div><div class="t" style="left:323.80px;width:300px;text-align:right;top:418.26px;font-size:8.2px;color:#000;">2905.21</div><div class="r" style="left:279px;top:437px;width:201px;height:1px;background:#000;"></div><div class="t" style="left:72.50px;width:300px;text-align:right;top:430.51px;font-size:9.0px;color:#000;">23.5</div><div class="t" style="left:176.50px;width:300px;text-align:right;top:430.51px;font-size:9.0px;color:#000;">54.2</div><div class="t" style="left:222.80px;width:300px;text-align:right;top:430.51px;font-size:9.0px;color:#000;">1273.7</div><div class="t" style="left:267.00px;width:300px;text-align:right;top:431.98px;font-size:8.2px;color:#000;">552.25</div><div class="t" style="left:323.80px;width:300px;text-align:right;top:431.98px;font-size:8.2px;color:#000;">2937.64</div><div class="r" style="left:279px;top:451px;width:201px;height:1px;background:#000;"></div><div class="t" style="left:72.50px;width:300px;text-align:right;top:444.23px;font-size:9.0px;color:#000;">30.5</div><div class="t" style="left:176.50px;width:300px;text-align:right;top:444.23px;font-size:9.0px;color:#000;">50.5</div><div class="t" style="left:222.80px;width:300px;text-align:right;top:444.23px;font-size:9.0px;color:#000;">1540.25</div><div class="t" style="left:267.00px;width:300px;text-align:right;top:445.71px;font-size:8.2px;color:#000;">930.25</div><div class="t" style="left:323.80px;width:300px;text-align:right;top:445.71px;font-size:8.2px;color:#000;">2550.25</div><div class="r" style="left:279px;top:465px;width:201px;height:1px;background:#000;"></div><div class="t" style="left:72.50px;width:300px;text-align:right;top:457.96px;font-size:9.0px;color:#000;">27.5</div><div class="t" style="left:176.50px;width:300px;text-align:right;top:457.96px;font-size:9.0px;color:#000;">51.2</div><div class="t" style="left:222.80px;width:300px;text-align:right;top:457.96px;font-size:9.0px;color:#000;">1408</div><div class="t" style="left:267.00px;width:300px;text-align:right;top:459.43px;font-size:8.2px;color:#000;">756.25</div><div class="t" style="left:323.80px;width:300px;text-align:right;top:459.43px;font-size:8.2px;color:#000;">2621.44</div><div class="r" style="left:279px;top:478px;width:201px;height:1px;background:#000;"></div><div class="t" style="left:72.50px;width:300px;text-align:right;top:471.68px;font-size:9.0px;color:#000;">28</div><div class="t" style="left:176.50px;width:300px;text-align:right;top:471.68px;font-size:9.0px;color:#000;">51.5</div><div class="t" style="left:222.80px;width:300px;text-align:right;top:471.68px;font-size:9.0px;color:#000;">1442</div><div class="t" style="left:267.00px;width:300px;text-align:right;top:473.16px;font-size:8.2px;color:#000;">784.00</div><div class="t" style="left:323.80px;width:300px;text-align:right;top:473.16px;font-size:8.2px;color:#000;">2652.25</div><div class="r" style="left:279px;top:492px;width:201px;height:1px;background:#000;"></div><div class="t" style="left:72.50px;width:300px;text-align:right;top:485.41px;font-size:9.0px;color:#000;">26</div><div class="t" style="left:176.50px;width:300px;text-align:right;top:485.41px;font-size:9.0px;color:#000;">52.6</div><div class="t" style="left:222.80px;width:300px;text-align:right;top:485.41px;font-size:9.0px;color:#000;">1367.6</div><div class="t" style="left:267.00px;width:300px;text-align:right;top:486.88px;font-size:8.2px;color:#000;">676.00</div><div class="t" style="left:323.80px;width:300px;text-align:right;top:486.88px;font-size:8.2px;color:#000;">2766.76</div><div class="r" style="left:279px;top:506px;width:201px;height:1px;background:#000;"></div><div class="t" style="left:72.50px;width:300px;text-align:right;top:499.13px;font-size:9.0px;color:#000;">25.5</div><div class="t" style="left:176.50px;width:300px;text-align:right;top:499.13px;font-size:9.0px;color:#000;">52.8</div><div class="t" style="left:222.80px;width:300px;text-align:right;top:499.13px;font-size:9.0px;color:#000;">1346.4</div><div class="t" style="left:267.00px;width:300px;text-align:right;top:500.61px;font-size:8.2px;color:#000;">650.25</div><div class="t" style="left:323.80px;width:300px;text-align:right;top:500.61px;font-size:8.2px;color:#000;">2787.84</div><div class="r" style="left:279px;top:520px;width:201px;height:1px;background:#000;"></div><div class="t" style="left:72.50px;width:300px;text-align:right;top:512.86px;font-size:9.0px;color:#000;">26.5</div><div class="t" style="left:176.50px;width:300px;text-align:right;top:512.86px;font-size:9.0px;color:#000;">52.9</div><div class="t" style="left:222.80px;width:300px;text-align:right;top:512.86px;font-size:9.0px;color:#000;">1401.85</div><div class="t" style="left:267.00px;width:300px;text-align:right;top:514.33px;font-size:8.2px;color:#000;">702.25</div><div class="t" style="left:323.80px;width:300px;text-align:right;top:514.33px;font-size:8.2px;color:#000;">2798.41</div><div class="r" style="left:279px;top:533px;width:201px;height:1px;background:#000;"></div><div class="t" style="left:72.50px;width:300px;text-align:right;top:526.58px;font-size:9.0px;color:#000;">33</div><div class="t" style="left:176.50px;width:300px;text-align:right;top:526.58px;font-size:9.0px;color:#000;">49.5</div><div class="t" style="left:222.80px;width:300px;text-align:right;top:526.58px;font-size:9.0px;color:#000;">1633.5</div><div class="t" style="left:267.00px;width:300px;text-align:right;top:528.06px;font-size:8.2px;color:#000;">1089.00</div><div class="t" style="left:323.80px;width:300px;text-align:right;top:528.06px;font-size:8.2px;color:#000;">2450.25</div><div class="r" style="left:279px;top:547px;width:201px;height:1px;background:#000;"></div><div class="t" style="left:72.50px;width:300px;text-align:right;top:540.31px;font-size:9.0px;color:#000;">15</div><div class="t" style="left:176.50px;width:300px;text-align:right;top:540.31px;font-size:9.0px;color:#000;">49.8</div><div class="t" style="left:222.80px;width:300px;text-align:right;top:540.31px;font-size:9.0px;color:#000;">747</div><div class="t" style="left:267.00px;width:300px;text-align:right;top:541.78px;font-size:8.2px;color:#000;">225.00</div><div class="t" style="left:323.80px;width:300px;text-align:right;top:541.78px;font-size:8.2px;color:#000;">2480.04</div><div class="r" style="left:279px;top:561px;width:201px;height:1px;background:#000;"></div><div class="t" style="left:72.50px;width:300px;text-align:right;top:554.03px;font-size:9.0px;color:#000;">27.5</div><div class="t" style="left:176.50px;width:300px;text-align:right;top:554.03px;font-size:9.0px;color:#000;">50.3</div><div class="t" style="left:222.80px;width:300px;text-align:right;top:554.03px;font-size:9.0px;color:#000;">1383.25</div><div class="t" style="left:267.00px;width:300px;text-align:right;top:555.51px;font-size:8.2px;color:#000;">756.25</div><div class="t" style="left:323.80px;width:300px;text-align:right;top:555.51px;font-size:8.2px;color:#000;">2530.09</div><div class="r" style="left:279px;top:574px;width:201px;height:1px;background:#000;"></div><div class="t" style="left:72.50px;width:300px;text-align:right;top:567.76px;font-size:9.0px;color:#000;">36</div><div class="t" style="left:176.50px;width:300px;text-align:right;top:567.76px;font-size:9.0px;color:#000;">54.3</div><div class="t" style="left:222.80px;width:300px;text-align:right;top:567.76px;font-size:9.0px;color:#000;">1954.8</div><div class="t" style="left:267.00px;width:300px;text-align:right;top:569.23px;font-size:8.2px;color:#000;">1296.00</div><div class="t" style="left:323.80px;width:300px;text-align:right;top:569.23px;font-size:8.2px;color:#000;">2948.49</div><div class="r" style="left:279px;top:588px;width:201px;height:1px;background:#000;"></div><div class="t" style="left:72.50px;width:300px;text-align:right;top:581.48px;font-size:9.0px;color:#000;">27</div><div class="t" style="left:176.50px;width:300px;text-align:right;top:581.48px;font-size:9.0px;color:#000;">55.1</div><div class="t" style="left:222.80px;width:300px;text-align:right;top:581.48px;font-size:9.0px;color:#000;">1487.7</div><div class="t" style="left:267.00px;width:300px;text-align:right;top:582.96px;font-size:8.2px;color:#000;">729.00</div><div class="t" style="left:323.80px;width:300px;text-align:right;top:582.96px;font-size:8.2px;color:#000;">3036.01</div><div class="r" style="left:279px;top:602px;width:201px;height:1px;background:#000;"></div><div class="t" style="left:72.50px;width:300px;text-align:right;top:595.21px;font-size:9.0px;color:#000;">34.5</div><div class="t" style="left:176.50px;width:300px;text-align:right;top:595.21px;font-size:9.0px;color:#000;">55.3</div><div class="t" style="left:222.80px;width:300px;text-align:right;top:595.21px;font-size:9.0px;color:#000;">1907.85</div><div class="t" style="left:267.00px;width:300px;text-align:right;top:596.68px;font-size:8.2px;color:#000;">1190.25</div><div class="t" style="left:323.80px;width:300px;text-align:right;top:596.68px;font-size:8.2px;color:#000;">3058.09</div><div class="r" style="left:279px;top:616px;width:201px;height:1px;background:#000;"></div><div class="t" style="left:72.50px;width:300px;text-align:right;top:608.93px;font-size:9.0px;color:#000;">39</div><div class="t" style="left:176.50px;width:300px;text-align:right;top:608.93px;font-size:9.0px;color:#000;">61.7</div><div class="t" style="left:222.80px;width:300px;text-align:right;top:608.93px;font-size:9.0px;color:#000;">2406.3</div><div class="t" style="left:267.00px;width:300px;text-align:right;top:610.41px;font-size:8.2px;color:#000;">1521.00</div><div class="t" style="left:323.80px;width:300px;text-align:right;top:610.41px;font-size:8.2px;color:#000;">3806.89</div><div class="r" style="left:279px;top:629px;width:201px;height:1px;background:#000;"></div><div class="t" style="left:72.50px;width:300px;text-align:right;top:622.66px;font-size:9.0px;color:#000;">37</div><div class="t" style="left:176.50px;width:300px;text-align:right;top:622.66px;font-size:9.0px;color:#000;">62.3</div><div class="t" style="left:222.80px;width:300px;text-align:right;top:622.66px;font-size:9.0px;color:#000;">2305.1</div><div class="t" style="left:267.00px;width:300px;text-align:right;top:624.13px;font-size:8.2px;color:#000;">1369.00</div><div class="t" style="left:323.80px;width:300px;text-align:right;top:624.13px;font-size:8.2px;color:#000;">3881.29</div><div class="r" style="left:279px;top:643px;width:201px;height:1px;background:#000;"></div><div class="t" style="left:72.50px;width:300px;text-align:right;top:636.38px;font-size:9.0px;color:#000;">31.5</div><div class="t" style="left:176.50px;width:300px;text-align:right;top:636.38px;font-size:9.0px;color:#000;">63.4</div><div class="t" style="left:222.80px;width:300px;text-align:right;top:636.38px;font-size:9.0px;color:#000;">1997.1</div><div class="t" style="left:267.00px;width:300px;text-align:right;top:637.86px;font-size:8.2px;color:#000;">992.25</div><div class="t" style="left:323.80px;width:300px;text-align:right;top:637.86px;font-size:8.2px;color:#000;">4019.56</div><div class="r" style="left:279px;top:657px;width:201px;height:1px;background:#000;"></div><div class="t" style="left:72.50px;width:300px;text-align:right;top:650.11px;font-size:9.0px;color:#000;">37</div><div class="t" style="left:176.50px;width:300px;text-align:right;top:650.11px;font-size:9.0px;color:#000;">63.7</div><div class="t" style="left:222.80px;width:300px;text-align:right;top:650.11px;font-size:9.0px;color:#000;">2356.9</div><div class="t" style="left:267.00px;width:300px;text-align:right;top:651.58px;font-size:8.2px;color:#000;">1369.00</div><div class="t" style="left:323.80px;width:300px;text-align:right;top:651.58px;font-size:8.2px;color:#000;">4057.69</div><div class="r" style="left:279px;top:670px;width:201px;height:1px;background:#000;"></div><div class="t" style="left:72.50px;width:300px;text-align:right;top:663.83px;font-size:9.0px;color:#000;">24.5</div><div class="t" style="left:176.50px;width:300px;text-align:right;top:663.83px;font-size:9.0px;color:#000;">55.5</div><div class="t" style="left:222.80px;width:300px;text-align:right;top:663.83px;font-size:9.0px;color:#000;">1359.75</div><div class="t" style="left:267.00px;width:300px;text-align:right;top:665.31px;font-size:8.2px;color:#000;">600.25</div><div class="t" style="left:323.80px;width:300px;text-align:right;top:665.31px;font-size:8.2px;color:#000;">3080.25</div><div class="r" style="left:279px;top:684px;width:201px;height:1px;background:#000;"></div><div class="t" style="left:72.50px;width:300px;text-align:right;top:677.56px;font-size:9.0px;color:#000;">28</div><div class="t" style="left:176.50px;width:300px;text-align:right;top:677.56px;font-size:9.0px;color:#000;">55.6</div><div class="t" style="left:222.80px;width:300px;text-align:right;top:677.56px;font-size:9.0px;color:#000;">1556.8</div><div class="t" style="left:267.00px;width:300px;text-align:right;top:679.03px;font-size:8.2px;color:#000;">784.00</div><div class="t" style="left:323.80px;width:300px;text-align:right;top:679.03px;font-size:8.2px;color:#000;">3091.36</div><div class="r" style="left:279px;top:698px;width:201px;height:1px;background:#000;"></div><div class="t" style="left:72.50px;width:300px;text-align:right;top:691.28px;font-size:9.0px;color:#000;">19</div><div class="t" style="left:176.50px;width:300px;text-align:right;top:691.28px;font-size:9.0px;color:#000;">55.7</div><div class="t" style="left:222.80px;width:300px;text-align:right;top:691.28px;font-size:9.0px;color:#000;">1058.3</div><div class="t" style="left:267.00px;width:300px;text-align:right;top:692.76px;font-size:8.2px;color:#000;">361.00</div><div class="t" style="left:323.80px;width:300px;text-align:right;top:692.76px;font-size:8.2px;color:#000;">3102.49</div><div class="r" style="left:279px;top:712px;width:201px;height:1px;background:#000;"></div><div class="t" style="left:72.50px;width:300px;text-align:right;top:705.01px;font-size:9.0px;color:#000;">38.5</div><div class="t" style="left:176.50px;width:300px;text-align:right;top:705.01px;font-size:9.0px;color:#000;">58.2</div><div class="t" style="left:222.80px;width:300px;text-align:right;top:705.01px;font-size:9.0px;color:#000;">2240.7</div><div class="t" style="left:267.00px;width:300px;text-align:right;top:706.48px;font-size:8.2px;color:#000;">1482.25</div><div class="t" style="left:323.80px;width:300px;text-align:right;top:706.48px;font-size:8.2px;color:#000;">3387.24</div><div class="r" style="left:279px;top:725px;width:201px;height:1px;background:#000;"></div><div class="t" style="left:72.50px;width:300px;text-align:right;top:718.73px;font-size:9.0px;color:#000;">37.5</div><div class="t" style="left:176.50px;width:300px;text-align:right;top:718.73px;font-size:9.0px;color:#000;">58.3</div><div class="t" style="left:222.80px;width:300px;text-align:right;top:718.73px;font-size:9.0px;color:#000;">2186.25</div><div class="t" style="left:267.00px;width:300px;text-align:right;top:720.21px;font-size:8.2px;color:#000;">1406.25</div><div class="t" style="left:323.80px;width:300px;text-align:right;top:720.21px;font-size:8.2px;color:#000;">3398.89</div><div class="r" style="left:279px;top:739px;width:201px;height:1px;background:#000;"></div><div class="t" style="left:72.50px;width:300px;text-align:right;top:732.46px;font-size:9.0px;color:#000;">18.5</div><div class="t" style="left:176.50px;width:300px;text-align:right;top:732.46px;font-size:9.0px;color:#000;">58.4</div><div class="t" style="left:222.80px;width:300px;text-align:right;top:732.46px;font-size:9.0px;color:#000;">1080.4</div><div class="t" style="left:267.00px;width:300px;text-align:right;top:733.93px;font-size:8.2px;color:#000;">342.25</div><div class="t" style="left:323.80px;width:300px;text-align:right;top:733.93px;font-size:8.2px;color:#000;">3410.56</div><div class="r" style="left:279px;top:753px;width:201px;height:1px;background:#000;"></div><div class="t" style="left:72.50px;width:300px;text-align:right;top:746.18px;font-size:9.0px;color:#000;">32</div><div class="t" style="left:176.50px;width:300px;text-align:right;top:746.18px;font-size:9.0px;color:#000;">59.2</div><div class="t" style="left:222.80px;width:300px;text-align:right;top:746.18px;font-size:9.0px;color:#000;">1894.4</div><div class="t" style="left:267.00px;width:300px;text-align:right;top:747.66px;font-size:8.2px;color:#000;">1024.00</div><div class="t" style="left:323.80px;width:300px;text-align:right;top:747.66px;font-size:8.2px;color:#000;">3504.64</div><div class="r" style="left:279px;top:767px;width:201px;height:1px;background:#000;"></div><div class="t" style="left:72.50px;width:300px;text-align:right;top:759.91px;font-size:9.0px;color:#000;">35</div><div class="t" style="left:176.50px;width:300px;text-align:right;top:759.91px;font-size:9.0px;color:#000;">59.3</div><div class="t" style="left:222.80px;width:300px;text-align:right;top:759.91px;font-size:9.0px;color:#000;">2075.5</div><div class="t" style="left:267.00px;width:300px;text-align:right;top:761.38px;font-size:8.2px;color:#000;">1225.00</div><div class="t" style="left:323.80px;width:300px;text-align:right;top:761.38px;font-size:8.2px;color:#000;">3516.49</div><div class="r" style="left:279px;top:780px;width:201px;height:1px;background:#000;"></div><div class="t" style="left:72.50px;width:300px;text-align:right;top:773.63px;font-size:9.0px;color:#000;">36</div><div class="t" style="left:176.50px;width:300px;text-align:right;top:773.63px;font-size:9.0px;color:#000;">59.4</div><div class="t" style="left:222.80px;width:300px;text-align:right;top:773.63px;font-size:9.0px;color:#000;">2138.4</div><div class="t" style="left:267.00px;width:300px;text-align:right;top:775.11px;font-size:8.2px;color:#000;">1296.00</div><div class="t" style="left:323.80px;width:300px;text-align:right;top:775.11px;font-size:8.2px;color:#000;">3528.36</div><div class="r" style="left:279px;top:794px;width:201px;height:1px;background:#000;"></div><div class="t" style="left:72.50px;width:300px;text-align:right;top:787.36px;font-size:9.0px;color:#000;">39</div><div class="t" style="left:176.50px;width:300px;text-align:right;top:787.36px;font-size:9.0px;color:#000;">60.5</div><div class="t" style="left:222.80px;width:300px;text-align:right;top:787.36px;font-size:9.0px;color:#000;">2359.5</div><div class="t" style="left:267.00px;width:300px;text-align:right;top:788.83px;font-size:8.2px;color:#000;">1521.00</div><div class="t" style="left:323.80px;width:300px;text-align:right;top:788.83px;font-size:8.2px;color:#000;">3660.25</div><div class="r" style="left:725px;top:160px;width:495px;height:701px;background:#fff;box-shadow:0 0 1.5px rgba(0,0,0,0.5)"></div><div class="r" style="left:784px;top:220px;width:1px;height:344px;background:#000;"></div><div class="r" style="left:881px;top:220px;width:1px;height:344px;background:#000;"></div><div class="r" style="left:984px;top:220px;width:1px;height:344px;background:#000;"></div><div class="r" style="left:784px;top:234px;width:201px;height:1px;background:#000;"></div><div class="t" style="left:577.50px;width:300px;text-align:right;top:227.08px;font-size:9.0px;color:#000;">24.5</div><div class="t" style="left:681.50px;width:300px;text-align:right;top:227.08px;font-size:9.0px;color:#000;">56.7</div><div class="t" style="left:727.80px;width:300px;text-align:right;top:227.08px;font-size:9.0px;color:#000;">1389.15</div><div class="t" style="left:772.00px;width:300px;text-align:right;top:228.56px;font-size:8.2px;color:#000;">600.25</div><div class="t" style="left:828.80px;width:300px;text-align:right;top:228.56px;font-size:8.2px;color:#000;">3214.89</div><div class="r" style="left:784px;top:247px;width:201px;height:1px;background:#000;"></div><div class="t" style="left:577.50px;width:300px;text-align:right;top:240.81px;font-size:9.0px;color:#000;">26</div><div class="t" style="left:681.50px;width:300px;text-align:right;top:240.81px;font-size:9.0px;color:#000;">57.8</div><div class="t" style="left:727.80px;width:300px;text-align:right;top:240.81px;font-size:9.0px;color:#000;">1502.8</div><div class="t" style="left:772.00px;width:300px;text-align:right;top:242.28px;font-size:8.2px;color:#000;">676.00</div><div class="t" style="left:828.80px;width:300px;text-align:right;top:242.28px;font-size:8.2px;color:#000;">3340.84</div><div class="r" style="left:784px;top:261px;width:201px;height:1px;background:#000;"></div><div class="t" style="left:577.50px;width:300px;text-align:right;top:254.53px;font-size:9.0px;color:#000;">38</div><div class="t" style="left:681.50px;width:300px;text-align:right;top:254.53px;font-size:9.0px;color:#000;">63.8</div><div class="t" style="left:727.80px;width:300px;text-align:right;top:254.53px;font-size:9.0px;color:#000;">2424.4</div><div class="t" style="left:772.00px;width:300px;text-align:right;top:256.01px;font-size:8.2px;color:#000;">1444.00</div><div class="t" style="left:828.80px;width:300px;text-align:right;top:256.01px;font-size:8.2px;color:#000;">4070.44</div><div class="r" style="left:784px;top:275px;width:201px;height:1px;background:#000;"></div><div class="t" style="left:577.50px;width:300px;text-align:right;top:268.26px;font-size:9.0px;color:#000;">44.5</div><div class="t" style="left:681.50px;width:300px;text-align:right;top:268.26px;font-size:9.0px;color:#000;">64.2</div><div class="t" style="left:727.80px;width:300px;text-align:right;top:268.26px;font-size:9.0px;color:#000;">2856.9</div><div class="t" style="left:772.00px;width:300px;text-align:right;top:269.73px;font-size:8.2px;color:#000;">1980.25</div><div class="t" style="left:828.80px;width:300px;text-align:right;top:269.73px;font-size:8.2px;color:#000;">4121.64</div><div class="r" style="left:784px;top:289px;width:201px;height:1px;background:#000;"></div><div class="t" style="left:577.50px;width:300px;text-align:right;top:281.98px;font-size:9.0px;color:#000;">34.5</div><div class="t" style="left:681.50px;width:300px;text-align:right;top:281.98px;font-size:9.0px;color:#000;">55.8</div><div class="t" style="left:727.80px;width:300px;text-align:right;top:281.98px;font-size:9.0px;color:#000;">1925.1</div><div class="t" style="left:772.00px;width:300px;text-align:right;top:283.46px;font-size:8.2px;color:#000;">1190.25</div><div class="t" style="left:828.80px;width:300px;text-align:right;top:283.46px;font-size:8.2px;color:#000;">3113.64</div><div class="r" style="left:784px;top:302px;width:201px;height:1px;background:#000;"></div><div class="t" style="left:577.50px;width:300px;text-align:right;top:295.71px;font-size:9.0px;color:#000;">34.5</div><div class="t" style="left:681.50px;width:300px;text-align:right;top:295.71px;font-size:9.0px;color:#000;">56.2</div><div class="t" style="left:727.80px;width:300px;text-align:right;top:295.71px;font-size:9.0px;color:#000;">1938.9</div><div class="t" style="left:772.00px;width:300px;text-align:right;top:297.18px;font-size:8.2px;color:#000;">1190.25</div><div class="t" style="left:828.80px;width:300px;text-align:right;top:297.18px;font-size:8.2px;color:#000;">3158.44</div><div class="r" style="left:784px;top:316px;width:201px;height:1px;background:#000;"></div><div class="t" style="left:577.50px;width:300px;text-align:right;top:309.43px;font-size:9.0px;color:#000;">40</div><div class="t" style="left:681.50px;width:300px;text-align:right;top:309.43px;font-size:9.0px;color:#000;">64.3</div><div class="t" style="left:727.80px;width:300px;text-align:right;top:309.43px;font-size:9.0px;color:#000;">2572</div><div class="t" style="left:772.00px;width:300px;text-align:right;top:310.91px;font-size:8.2px;color:#000;">1600.00</div><div class="t" style="left:828.80px;width:300px;text-align:right;top:310.91px;font-size:8.2px;color:#000;">4134.49</div><div class="r" style="left:784px;top:330px;width:201px;height:1px;background:#000;"></div><div class="t" style="left:577.50px;width:300px;text-align:right;top:323.16px;font-size:9.0px;color:#000;">41.5</div><div class="t" style="left:681.50px;width:300px;text-align:right;top:323.16px;font-size:9.0px;color:#000;">64.5</div><div class="t" style="left:727.80px;width:300px;text-align:right;top:323.16px;font-size:9.0px;color:#000;">2676.75</div><div class="t" style="left:772.00px;width:300px;text-align:right;top:324.63px;font-size:8.2px;color:#000;">1722.25</div><div class="t" style="left:828.80px;width:300px;text-align:right;top:324.63px;font-size:8.2px;color:#000;">4160.25</div><div class="r" style="left:784px;top:344px;width:201px;height:1px;background:#000;"></div><div class="t" style="left:577.50px;width:300px;text-align:right;top:336.88px;font-size:9.0px;color:#000;">34.5</div><div class="t" style="left:681.50px;width:300px;text-align:right;top:336.88px;font-size:9.0px;color:#000;">64.7</div><div class="t" style="left:727.80px;width:300px;text-align:right;top:336.88px;font-size:9.0px;color:#000;">2232.15</div><div class="t" style="left:772.00px;width:300px;text-align:right;top:338.36px;font-size:8.2px;color:#000;">1190.25</div><div class="t" style="left:828.80px;width:300px;text-align:right;top:338.36px;font-size:8.2px;color:#000;">4186.09</div><div class="r" style="left:784px;top:357px;width:201px;height:1px;background:#000;"></div><div class="t" style="left:577.50px;width:300px;text-align:right;top:350.61px;font-size:9.0px;color:#000;">42.3</div><div class="t" style="left:681.50px;width:300px;text-align:right;top:350.61px;font-size:9.0px;color:#000;">66.1</div><div class="t" style="left:727.80px;width:300px;text-align:right;top:350.61px;font-size:9.0px;color:#000;">2796.03</div><div class="t" style="left:772.00px;width:300px;text-align:right;top:352.08px;font-size:8.2px;color:#000;">1789.29</div><div class="t" style="left:828.80px;width:300px;text-align:right;top:352.08px;font-size:8.2px;color:#000;">4369.21</div><div class="r" style="left:784px;top:371px;width:201px;height:1px;background:#000;"></div><div class="t" style="left:577.50px;width:300px;text-align:right;top:364.33px;font-size:9.0px;color:#000;">34.5</div><div class="t" style="left:681.50px;width:300px;text-align:right;top:364.33px;font-size:9.0px;color:#000;">72.3</div><div class="t" style="left:727.80px;width:300px;text-align:right;top:364.33px;font-size:9.0px;color:#000;">2494.35</div><div class="t" style="left:772.00px;width:300px;text-align:right;top:365.81px;font-size:8.2px;color:#000;">1190.25</div><div class="t" style="left:828.80px;width:300px;text-align:right;top:365.81px;font-size:8.2px;color:#000;">5227.29</div><div class="r" style="left:784px;top:385px;width:201px;height:1px;background:#000;"></div><div class="t" style="left:577.50px;width:300px;text-align:right;top:378.06px;font-size:9.0px;color:#000;">28</div><div class="t" style="left:681.50px;width:300px;text-align:right;top:378.06px;font-size:9.0px;color:#000;">73.2</div><div class="t" style="left:727.80px;width:300px;text-align:right;top:378.06px;font-size:9.0px;color:#000;">2049.6</div><div class="t" style="left:772.00px;width:300px;text-align:right;top:379.53px;font-size:8.2px;color:#000;">784.00</div><div class="t" style="left:828.80px;width:300px;text-align:right;top:379.53px;font-size:8.2px;color:#000;">5358.24</div><div class="r" style="left:784px;top:398px;width:201px;height:1px;background:#000;"></div><div class="t" style="left:577.50px;width:300px;text-align:right;top:391.78px;font-size:9.0px;color:#000;">38</div><div class="t" style="left:681.50px;width:300px;text-align:right;top:391.78px;font-size:9.0px;color:#000;">74.2</div><div class="t" style="left:727.80px;width:300px;text-align:right;top:391.78px;font-size:9.0px;color:#000;">2819.6</div><div class="t" style="left:772.00px;width:300px;text-align:right;top:393.26px;font-size:8.2px;color:#000;">1444.00</div><div class="t" style="left:828.80px;width:300px;text-align:right;top:393.26px;font-size:8.2px;color:#000;">5505.64</div><div class="r" style="left:784px;top:412px;width:201px;height:1px;background:#000;"></div><div class="t" style="left:577.50px;width:300px;text-align:right;top:405.51px;font-size:9.0px;color:#000;">31.5</div><div class="t" style="left:681.50px;width:300px;text-align:right;top:405.51px;font-size:9.0px;color:#000;">68.5</div><div class="t" style="left:727.80px;width:300px;text-align:right;top:405.51px;font-size:9.0px;color:#000;">2157.75</div><div class="t" style="left:772.00px;width:300px;text-align:right;top:406.98px;font-size:8.2px;color:#000;">992.25</div><div class="t" style="left:828.80px;width:300px;text-align:right;top:406.98px;font-size:8.2px;color:#000;">4692.25</div><div class="r" style="left:784px;top:426px;width:201px;height:1px;background:#000;"></div><div class="t" style="left:577.50px;width:300px;text-align:right;top:419.23px;font-size:9.0px;color:#000;">36</div><div class="t" style="left:681.50px;width:300px;text-align:right;top:419.23px;font-size:9.0px;color:#000;">69.7</div><div class="t" style="left:727.80px;width:300px;text-align:right;top:419.23px;font-size:9.0px;color:#000;">2509.2</div><div class="t" style="left:772.00px;width:300px;text-align:right;top:420.71px;font-size:8.2px;color:#000;">1296.00</div><div class="t" style="left:828.80px;width:300px;text-align:right;top:420.71px;font-size:8.2px;color:#000;">4858.09</div><div class="r" style="left:784px;top:440px;width:201px;height:1px;background:#000;"></div><div class="t" style="left:577.50px;width:300px;text-align:right;top:432.96px;font-size:9.0px;color:#000;">37.5</div><div class="t" style="left:681.50px;width:300px;text-align:right;top:432.96px;font-size:9.0px;color:#000;">71.2</div><div class="t" style="left:727.80px;width:300px;text-align:right;top:432.96px;font-size:9.0px;color:#000;">2670</div><div class="t" style="left:772.00px;width:300px;text-align:right;top:434.43px;font-size:8.2px;color:#000;">1406.25</div><div class="t" style="left:828.80px;width:300px;text-align:right;top:434.43px;font-size:8.2px;color:#000;">5069.44</div><div class="r" style="left:784px;top:453px;width:201px;height:1px;background:#000;"></div><div class="t" style="left:577.50px;width:300px;text-align:right;top:446.68px;font-size:9.0px;color:#000;">22</div><div class="t" style="left:681.50px;width:300px;text-align:right;top:446.68px;font-size:9.0px;color:#000;">66.3</div><div class="t" style="left:727.80px;width:300px;text-align:right;top:446.68px;font-size:9.0px;color:#000;">1458.6</div><div class="t" style="left:772.00px;width:300px;text-align:right;top:448.16px;font-size:8.2px;color:#000;">484.00</div><div class="t" style="left:828.80px;width:300px;text-align:right;top:448.16px;font-size:8.2px;color:#000;">4395.69</div><div class="r" style="left:784px;top:467px;width:201px;height:1px;background:#000;"></div><div class="t" style="left:577.50px;width:300px;text-align:right;top:460.41px;font-size:9.0px;color:#000;">33.5</div><div class="t" style="left:681.50px;width:300px;text-align:right;top:460.41px;font-size:9.0px;color:#000;">66.5</div><div class="t" style="left:727.80px;width:300px;text-align:right;top:460.41px;font-size:9.0px;color:#000;">2227.75</div><div class="t" style="left:772.00px;width:300px;text-align:right;top:461.88px;font-size:8.2px;color:#000;">1122.25</div><div class="t" style="left:828.80px;width:300px;text-align:right;top:461.88px;font-size:8.2px;color:#000;">4422.25</div><div class="r" style="left:784px;top:481px;width:201px;height:1px;background:#000;"></div><div class="t" style="left:577.50px;width:300px;text-align:right;top:474.13px;font-size:9.0px;color:#000;">37</div><div class="t" style="left:681.50px;width:300px;text-align:right;top:474.13px;font-size:9.0px;color:#000;">66.7</div><div class="t" style="left:727.80px;width:300px;text-align:right;top:474.13px;font-size:9.0px;color:#000;">2467.9</div><div class="t" style="left:772.00px;width:300px;text-align:right;top:475.61px;font-size:8.2px;color:#000;">1369.00</div><div class="t" style="left:828.80px;width:300px;text-align:right;top:475.61px;font-size:8.2px;color:#000;">4448.89</div><div class="r" style="left:784px;top:494px;width:201px;height:1px;background:#000;"></div><div class="t" style="left:577.50px;width:300px;text-align:right;top:487.86px;font-size:9.0px;color:#000;">43.5</div><div class="t" style="left:681.50px;width:300px;text-align:right;top:487.86px;font-size:9.0px;color:#000;">74.8</div><div class="t" style="left:727.80px;width:300px;text-align:right;top:487.86px;font-size:9.0px;color:#000;">3253.8</div><div class="t" style="left:772.00px;width:300px;text-align:right;top:489.33px;font-size:8.2px;color:#000;">1892.25</div><div class="t" style="left:828.80px;width:300px;text-align:right;top:489.33px;font-size:8.2px;color:#000;">5595.04</div><div class="r" style="left:784px;top:508px;width:201px;height:1px;background:#000;"></div><div class="t" style="left:577.50px;width:300px;text-align:right;top:501.58px;font-size:9.0px;color:#000;">20</div><div class="t" style="left:681.50px;width:300px;text-align:right;top:501.58px;font-size:9.0px;color:#000;">62.0</div><div class="t" style="left:727.80px;width:300px;text-align:right;top:501.58px;font-size:9.0px;color:#000;">1240</div><div class="t" style="left:772.00px;width:300px;text-align:right;top:503.06px;font-size:8.2px;color:#000;">400.00</div><div class="t" style="left:828.80px;width:300px;text-align:right;top:503.06px;font-size:8.2px;color:#000;">3844.00</div><div class="r" style="left:784px;top:522px;width:201px;height:1px;background:#000;"></div><div class="t" style="left:577.50px;width:300px;text-align:right;top:515.31px;font-size:9.0px;color:#000;">35</div><div class="t" style="left:681.50px;width:300px;text-align:right;top:515.31px;font-size:9.0px;color:#000;">57.3</div><div class="t" style="left:727.80px;width:300px;text-align:right;top:515.31px;font-size:9.0px;color:#000;">2005.5</div><div class="t" style="left:772.00px;width:300px;text-align:right;top:516.78px;font-size:8.2px;color:#000;">1225.00</div><div class="t" style="left:828.80px;width:300px;text-align:right;top:516.78px;font-size:8.2px;color:#000;">3283.29</div><div class="r" style="left:784px;top:536px;width:201px;height:1px;background:#000;"></div><div class="t" style="left:577.50px;width:300px;text-align:right;top:529.03px;font-size:9.0px;color:#000;">24</div><div class="t" style="left:681.50px;width:300px;text-align:right;top:529.03px;font-size:9.0px;color:#000;">55.3</div><div class="t" style="left:727.80px;width:300px;text-align:right;top:529.03px;font-size:9.0px;color:#000;">1327.2</div><div class="t" style="left:772.00px;width:300px;text-align:right;top:530.51px;font-size:8.2px;color:#000;">576.00</div><div class="t" style="left:828.80px;width:300px;text-align:right;top:530.51px;font-size:8.2px;color:#000;">3058.09</div><div class="r" style="left:784px;top:549px;width:201px;height:1px;background:#000;"></div><div class="t" style="left:577.50px;width:300px;text-align:right;top:542.76px;font-size:9.0px;color:#000;">20</div><div class="t" style="left:681.50px;width:300px;text-align:right;top:542.76px;font-size:9.0px;color:#000;">56.1</div><div class="t" style="left:727.80px;width:300px;text-align:right;top:542.76px;font-size:9.0px;color:#000;">1122</div><div class="t" style="left:772.00px;width:300px;text-align:right;top:544.23px;font-size:8.2px;color:#000;">400.00</div><div class="t" style="left:828.80px;width:300px;text-align:right;top:544.23px;font-size:8.2px;color:#000;">3147.21</div><div class="r" style="left:784px;top:563px;width:201px;height:1px;background:#000;"></div><div class="t" style="left:577.50px;width:300px;text-align:right;top:556.48px;font-size:9.0px;color:#000;">41</div><div class="t" style="left:681.50px;width:300px;text-align:right;top:556.48px;font-size:9.0px;color:#000;">61.5</div><div class="t" style="left:727.80px;width:300px;text-align:right;top:556.48px;font-size:9.0px;color:#000;">2521.5</div><div class="t" style="left:772.00px;width:300px;text-align:right;top:557.96px;font-size:8.2px;color:#000;">1681.00</div><div class="t" style="left:828.80px;width:300px;text-align:right;top:557.96px;font-size:8.2px;color:#000;">3782.25</div><div class="t" style="left:578.00px;width:300px;text-align:right;top:570.21px;font-size:9.0px;color:#000;">1941.8</div><div class="t" style="left:681.00px;width:300px;text-align:right;top:570.21px;font-size:9.0px;color:#000;">3726.3</div><div class="t" style="left:727.80px;width:300px;text-align:right;top:570.21px;font-size:9.0px;color:#000;">114153.7</div><div class="t" style="left:772.00px;width:300px;text-align:right;top:570.98px;font-size:8.2px;color:#000;">62151.54</div><div class="t" style="left:828.80px;width:300px;text-align:right;top:570.98px;font-size:8.2px;color:#000;">217994.19</div><svg class="r" style="left:1128px;top:572px" width="40" height="34" viewBox="1128 572 40 34"><path d="M1133.6 582.8 V577.6 H1138.8" fill="none" stroke="#7a7a7a" stroke-width="1"/><rect x="1136.6" y="579.5" width="22.6" height="20.8" rx="2.6" fill="#fbfbfb" stroke="#b4b4b4" stroke-width="1"/><rect x="1141.3" y="584" width="11.7" height="14" rx="1" fill="#ebb35c" stroke="#d99a3a" stroke-width="0.5"/><path d="M1143.4 585.6 V584.2 Q1144.2 582 1147.1 582 Q1150 582 1150.8 584.2 V585.6 Z" fill="#6b6b6b"/><rect x="1146.7" y="587.6" width="9" height="10.8" rx="0.8" fill="#fff" stroke="#8a8a8a" stroke-width="0.9"/><path d="M1148.6 590.6 H1153.6 M1148.6 592.6 H1153.6 M1148.6 594.6 H1153.6 M1148.6 596.6 H1153.6" stroke="#777" stroke-width="0.6"/></svg></div>
</div></body></html>
